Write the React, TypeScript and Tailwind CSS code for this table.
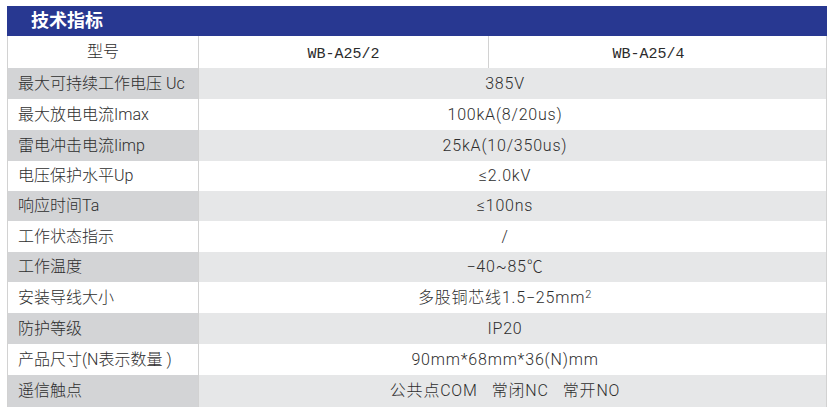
const rows: { label: string; value: React.ReactNode; h: string }[] = [
  { label: "最大可持续工作电压 Uc", value: "385V", h: "h-[31px]" },
  { label: "最大放电电流Imax", value: "100kA(8/20us)", h: "h-[31px]" },
  { label: "雷电冲击电流Iimp", value: "25kA(10/350us)", h: "h-[31px]" },
  { label: "电压保护水平Up", value: "≤2.0kV", h: "h-[30px]" },
  { label: "响应时间Ta", value: "≤100ns", h: "h-[30px]" },
  { label: "工作状态指示", value: "/", h: "h-[31px]" },
  { label: "工作温度", value: "−40~85℃", h: "h-[30px]" },
  {
    label: "安装导线大小",
    value: (
      <>
        多股铜芯线1.5−25mm<sup className="relative -top-[3px] text-[11px]">2</sup>
      </>
    ),
    h: "h-[31px]",
  },
  { label: "防护等级", value: "IP20", h: "h-[31px]" },
  { label: "产品尺寸(N表示数量 )", value: "90mm*68mm*36(N)mm", h: "h-[31px]" },
  {
    label: "遥信触点",
    value: <span className="whitespace-pre">公共点COM   常闭NC   常开NO</span>,
    h: "h-[32px]",
  },
];

export default function App() {
  return (
    <div
      className="min-h-screen bg-white pt-[6px] pl-[7px] text-[#2e2e2e]"
      style={{ fontFamily: 'Roboto, "Noto Sans CJK SC", sans-serif' }}
    >
      <div className="w-[820px]">
        <div
          className="flex h-[30px] items-center bg-[#283891] pl-[24px] text-[18px] font-bold text-white"
          style={{ fontFamily: '"Liberation Sans", "Noto Sans CJK SC", sans-serif' }}
        >
          技术指标
        </div>
        <div className="border-x border-[#d2d2d2] font-light">
          {/* model row */}
          <div className="flex h-[32px] bg-white">
            <div className="flex w-[191px] items-center justify-center border-r border-[#d2d2d2] text-[16px]">
              型号
            </div>
            <div
              className="flex w-[290px] items-center justify-center border-r border-[#d2d2d2] pt-[6px] text-[15px] font-normal text-[#2b2b2b]"
              style={{ fontFamily: '"Liberation Mono", monospace' }}
            >
              WB-A25/2
            </div>
            <div
              className="flex flex-1 items-center justify-center pt-[6px] pr-[18px] text-[15px] font-normal text-[#2b2b2b]"
              style={{ fontFamily: '"Liberation Mono", monospace' }}
            >
              WB-A25/4
            </div>
          </div>
          {rows.map((r, i) => {
            const gray = i % 2 === 0;
            return (
              <div key={r.label} className={`flex ${r.h}`}>
                <div
                  className={`flex w-[191px] items-center border-r border-[#d2d2d2] pl-[10px] text-[16px] ${gray ? "bg-[#d3d4d6]" : "bg-white"}`}
                >
                  {r.label}
                </div>
                <div
                  className={`flex flex-1 items-center justify-center pr-[15px] text-[16px] tracking-[0.8px] ${gray ? "bg-[#e6e7e8]" : "bg-white"}`}
                >
                  {r.value}
                </div>
              </div>
            );
          })}
        </div>
      </div>
    </div>
  );
}
